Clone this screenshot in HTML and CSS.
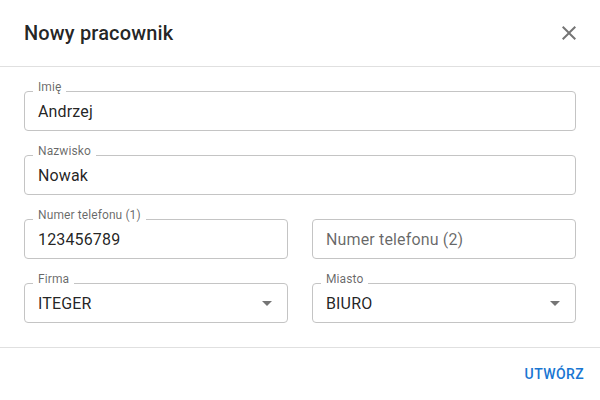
FILE: index.html
```html
<!DOCTYPE html>
<html lang="pl">
<head>
<meta charset="utf-8">
<title>Nowy pracownik</title>
<link rel="stylesheet" href="styles.css">
</head>
<body>
<div class="dialog">
  <header class="dialog-title">
    <h2 class="title-text">Nowy pracownik</h2>
    <button class="close-btn" aria-label="Zamknij">
      <svg viewBox="0 0 24 24" width="24" height="24"><path d="M19 6.41 17.59 5 12 10.59 6.41 5 5 6.41 10.59 12 5 17.59 6.41 19 12 13.41 17.59 19 19 17.59 13.41 12z" fill="currentColor"/></svg>
    </button>
  </header>
  <div class="dialog-content">
    <div class="field full">
      <span class="field-label">Imię</span>
      <span class="field-value">Andrzej</span>
    </div>
    <div class="field full">
      <span class="field-label">Nazwisko</span>
      <span class="field-value">Nowak</span>
    </div>
    <div class="field">
      <span class="field-label">Numer telefonu (1)</span>
      <span class="field-value">123456789</span>
    </div>
    <div class="field">
      <span class="field-placeholder">Numer telefonu (2)</span>
    </div>
    <div class="field select">
      <span class="field-label">Firma</span>
      <span class="field-value">ITEGER</span>
      <svg class="arrow" viewBox="0 0 24 24" width="24" height="24"><path d="M7 10l5 5 5-5z" fill="currentColor"/></svg>
    </div>
    <div class="field select">
      <span class="field-label">Miasto</span>
      <span class="field-value">BIURO</span>
      <svg class="arrow" viewBox="0 0 24 24" width="24" height="24"><path d="M7 10l5 5 5-5z" fill="currentColor"/></svg>
    </div>
  </div>
  <footer class="dialog-actions">
    <button class="text-btn">Utwórz</button>
  </footer>
</div>
</body>
</html>
```

FILE: styles.css
```css
* { box-sizing: border-box; }
html, body { margin: 0; padding: 0; background: #fff; }
body {
  font-family: Roboto, "Liberation Sans", sans-serif;
  color: rgba(0, 0, 0, 0.87);
  width: 600px;
  height: 400px;
  overflow: hidden;
}
.dialog { width: 600px; height: 400px; display: flex; flex-direction: column; }
.dialog-title {
  display: flex;
  align-items: center;
  justify-content: space-between;
  padding: 17px 19px 17px 24px;
  height: 66px;
}
.title-text {
  margin: 0;
  font-size: 20px;
  font-weight: 500;
  line-height: 32px;
  letter-spacing: 0.15px;
  color: rgba(0, 0, 0, 0.87);
}
.close-btn {
  border: 0;
  background: none;
  padding: 0;
  width: 24px;
  height: 24px;
  color: rgba(0, 0, 0, 0.54);
  display: flex;
}
.dialog-content {
  border-top: 1px solid #e0e0e0;
  border-bottom: 1px solid #e0e0e0;
  padding: 24px;
  display: grid;
  grid-template-columns: 1fr 1fr;
  gap: 24px;
}
.field {
  position: relative;
  height: 40px;
  border: 1px solid #c4c4c4;
  border-radius: 4px;
  padding: 0 13px;
  display: flex;
  align-items: center;
}
.field.full { grid-column: 1 / -1; }
.field-label {
  position: absolute;
  left: 8px;
  top: -11px;
  padding: 0 5px;
  background: #fff;
  font-size: 12px;
  line-height: 12px;
  color: rgba(0, 0, 0, 0.6);
  letter-spacing: 0.1px;
}
.field-value {
  font-size: 16px;
  line-height: 23px;
  letter-spacing: 0.15px;
  color: rgba(0, 0, 0, 0.87);
}
.field-placeholder {
  font-size: 16px;
  line-height: 23px;
  letter-spacing: 0.15px;
  color: rgba(0, 0, 0, 0.6);
}
.arrow {
  position: absolute;
  right: 8px;
  top: 7px;
  color: rgba(0, 0, 0, 0.54);
}
.dialog-actions {
  display: flex;
  justify-content: flex-end;
  padding: 8px;
}
.text-btn {
  border: 0;
  background: none;
  font-family: Roboto, "Liberation Sans", sans-serif;
  font-size: 14px;
  font-weight: 500;
  line-height: 24px;
  letter-spacing: 0.4px;
  text-transform: uppercase;
  color: #1976d2;
  padding: 6px 8px;
  min-width: 64px;
  border-radius: 4px;
}
```
